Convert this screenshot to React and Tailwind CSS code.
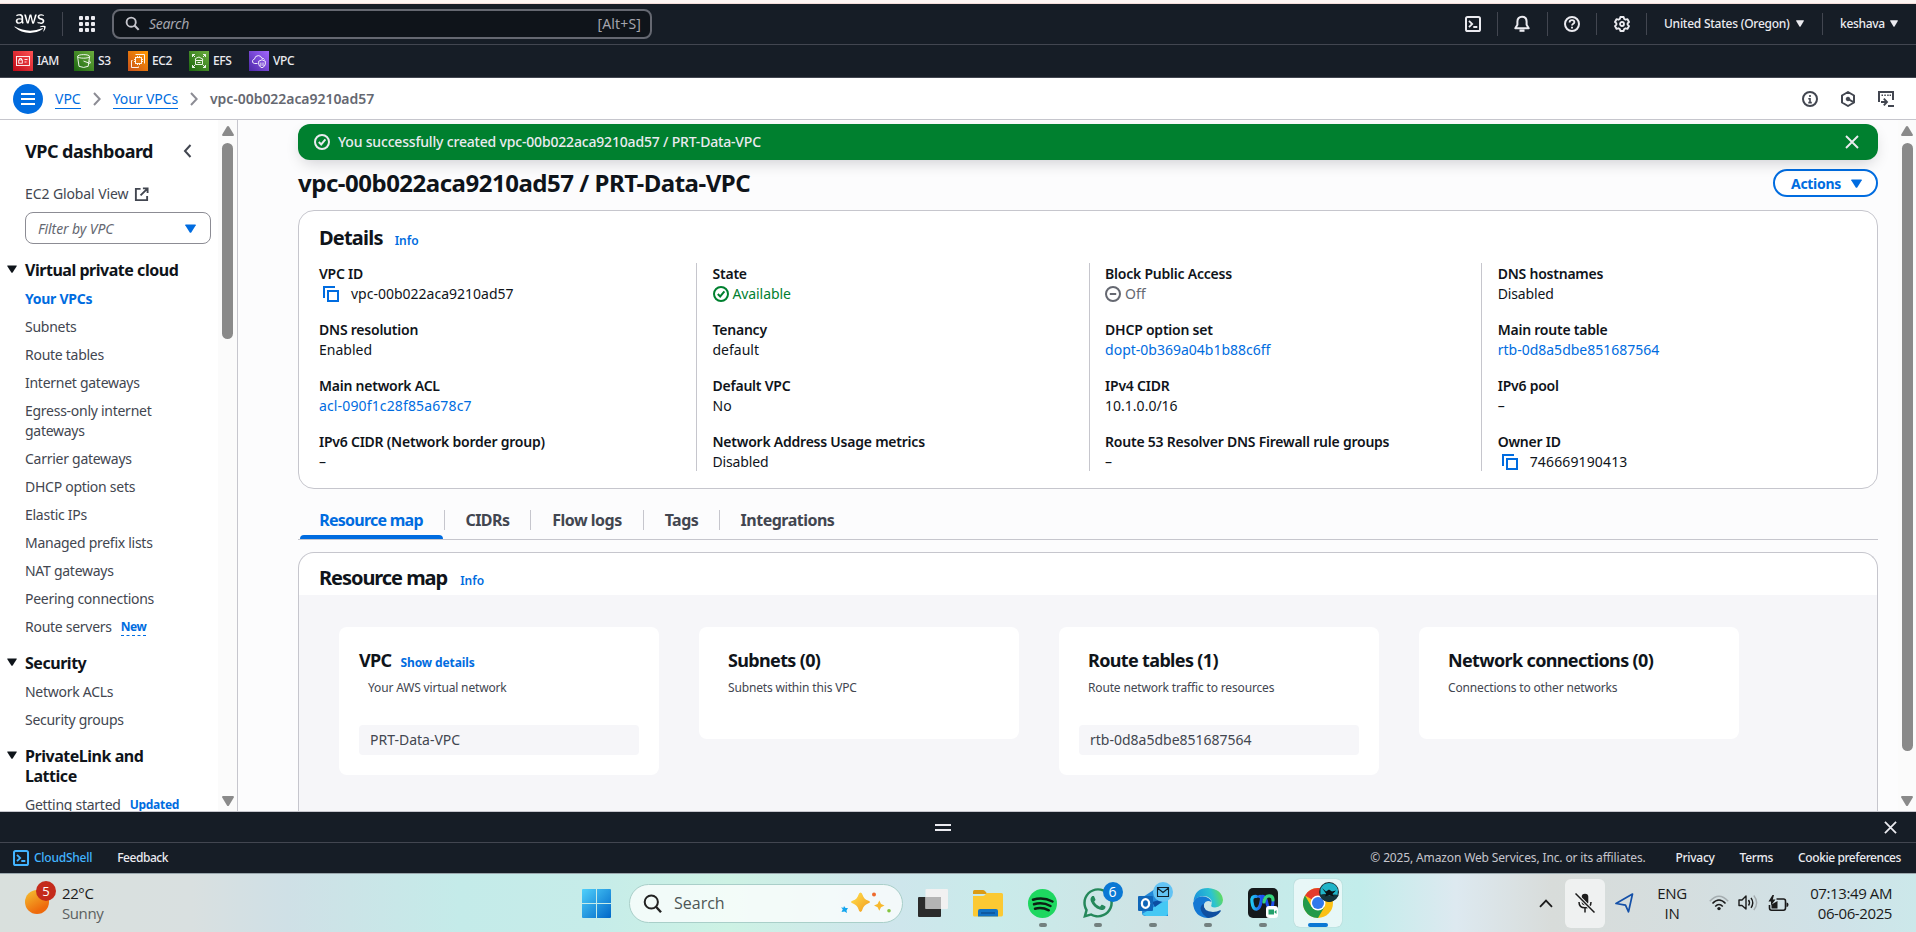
import React from "react";
import { FaAws, FaSpotify, FaWhatsapp } from "react-icons/fa";

const EMBER = "font-['Noto_Sans','Open_Sans',sans-serif]";

function Caret({ w = 10, h = 8, className = "" }) {
  return (
    <svg width={w} height={h} viewBox="0 0 10 8" preserveAspectRatio="none" className={`shrink-0 ${className}`}>
      <path d="M0.6 0.4H9.4Q10 0.4 9.8 1L5.7 7.5Q5 8 4.3 7.5L0.2 1Q0 0.4 0.6 0.4Z" fill="currentColor" />
    </svg>
  );
}

function Ico({ size = 16, children, sw = 2, className = "", vb = "0 0 16 16" }) {
  return (
    <svg width={size} height={size} viewBox={vb} fill="none" stroke="currentColor" strokeWidth={sw} className={`shrink-0 ${className}`}>
      {children}
    </svg>
  );
}

const ShellIcon = ({ className }) => (
  <Ico className={className}>
    <rect x="1" y="1" width="14" height="14" rx="1.6" />
    <path d="M4 4.8L7.2 8L4 11.2M8.3 11H12.3" strokeWidth="1.8" />
  </Ico>
);
const SearchIcon = ({ className, size = 16 }) => (
  <Ico className={className} size={size}>
    <circle cx="6.6" cy="6.6" r="4.9" />
    <path d="M10.2 10.2L14.6 14.8" strokeWidth="2.3" />
  </Ico>
);
const CheckCircle = ({ className }) => (
  <Ico className={className}>
    <circle cx="8" cy="8" r="7" />
    <path d="M4.8 8L7.2 10.4L11.4 5.4" />
  </Ico>
);
const CopyIcon = ({ className }) => (
  <Ico className={className}>
    <path d="M1 12V1H12" />
    <rect x="5" y="5" width="10" height="10" />
  </Ico>
);
const Close = ({ size = 14 }) => (
  <Ico size={size} vb="0 0 14 14">
    <path d="M1 1L13 13M13 1L1 13" strokeWidth="1.9" />
  </Ico>
);
const Crumb = ({ className }) => (
  <svg width="8" height="14" viewBox="0 0 8 14" fill="none" stroke="#8c8c94" strokeWidth="2" className={`shrink-0 ${className}`}>
    <path d="M1 1L6.7 7L1 13" />
  </svg>
);

function Favorite({ label, from, to, width, children }) {
  return (
    <div className={`flex items-center gap-1 ${width}`}>
      <svg width="20" height="20" viewBox="0 0 20 20" className="shrink-0" fill="none" stroke="#fff" strokeWidth="0.9">
        <defs>
          <linearGradient id={`fav-${label}`} x1="0" y1="1" x2="1" y2="0">
            <stop offset="0" stopColor={from} />
            <stop offset="1" stopColor={to} />
          </linearGradient>
        </defs>
        <rect width="20" height="20" fill={`url(#fav-${label})`} stroke="none" />
        {children}
      </svg>
      <span className="text-[12px] font-medium tracking-[-0.4px] text-[#ebebf0]">{label}</span>
    </div>
  );
}

function TopNav() {
  return (
    <header className="flex h-[41px] shrink-0 items-center border-b border-[#424650] bg-[#161d26] pb-[1px] text-[#ebebf0]">
      <FaAws className="ml-[14px] h-[25px] w-[32px] shrink-0 text-white" />
      <div className="ml-[16px] h-6 w-px bg-[#424650]" />
      <svg width="16" height="16" viewBox="0 0 16 16" className="ml-[16px] shrink-0" fill="#ebebf0">
        {[0, 6, 12].map((y) => [0, 6, 12].map((x) => <rect key={`${x}${y}`} x={x} y={y} width="4" height="4" rx="1" />))}
      </svg>
      <div className="ml-[17px] flex h-[30px] w-[540px] shrink-0 items-center rounded-lg border-2 border-[#656871] bg-[#0f141a] pl-[11px] pr-[9px]">
        <SearchIcon size={15} className="text-[#c6c6cd]" />
        <span className="ml-[9px] text-[14px] italic tracking-[-0.3px] text-[#a4a4ad]">Search</span>
        <span className="ml-auto text-[14px] tracking-[0.15px] text-[#a4a4ad]">[Alt+S]</span>
      </div>
      <div className="ml-auto flex items-center">
        <ShellIcon />
        <div className="ml-4 h-6 w-px bg-[#424650]" />
        <Ico className="ml-[15px]" size={18} vb="0 0 18 18" sw={2}>
          <path d="M2.3 13.2L4.4 9.8V6.6C4.4 3.6 6.3 1.8 9 1.8S13.6 3.6 13.6 6.6V9.8L15.7 13.2Z" strokeLinejoin="round" />
          <path d="M6.5 15.6H11.5" strokeWidth="2.4" />
        </Ico>
        <div className="ml-[16px] h-6 w-px bg-[#424650]" />
        <Ico className="ml-4">
          <circle cx="8" cy="8" r="7" />
          <path d="M5.6 6.4C5.6 4.9 6.6 4.1 8 4.1S10.4 5 10.4 6.2C10.4 7.8 8 7.8 8 9.6" strokeWidth="1.8" />
          <path d="M8 10.8V12.5" strokeWidth="1.9" />
        </Ico>
        <div className="ml-4 h-[22px] w-px bg-[#424650]" />
        <Ico className="ml-[17px]">
          <path d="M6.4 1H9.6L10.2 3L11.5 3.7L13.5 3.2L15 6L13.6 7.4V8.7L15 10.1L13.5 12.8L11.5 12.3L10.2 13L9.6 15H6.4L5.8 13L4.5 12.3L2.5 12.8L1 10.1L2.4 8.7V7.4L1 6L2.5 3.2L4.5 3.7L5.8 3Z" strokeWidth="1.9" strokeLinejoin="round" />
          <circle cx="8" cy="8" r="2" strokeWidth="1.8" />
        </Ico>
        <div className="ml-4 h-[22px] w-px bg-[#424650]" />
        <span className="ml-[17px] w-[132px] whitespace-nowrap text-[12px] font-medium tracking-[-0.25px]">United States (Oregon)</span>
        <Caret w={8} h={7} />
        <div className="ml-[18px] h-[22px] w-px bg-[#424650]" />
        <span className="ml-[17px] w-[50px] text-[12px] font-medium tracking-[-0.3px]">keshava</span>
        <Caret w={8} h={7} className="mr-[18px]" />
      </div>
    </header>
  );
}

function Favorites() {
  return (
    <div className="flex h-[33px] shrink-0 items-center border-b border-[#424650] bg-[#161d26] pl-[13px]">
      <Favorite label="IAM" from="#bd0816" to="#ff5252" width="w-[61px]">
        <rect x="3.5" y="5.5" width="13" height="9" />
        <rect x="5.7" y="9" width="3.6" height="3.2" />
        <path d="M6.5 9V7.5H8.5V9M11.5 8.5H14.5M11.5 11H13.5" />
      </Favorite>
      <Favorite label="S3" from="#1b660f" to="#6cae3e" width="w-[54px]">
        <ellipse cx="9.6" cy="5.4" rx="6" ry="1.8" />
        <path d="M3.6 5.5L5 15.3Q9.6 17.6 14.2 15.3L15.6 5.5M9.5 10L15.5 12.3Q17.5 12.4 15.2 9.7" />
      </Favorite>
      <Favorite label="EC2" from="#c8511b" to="#ff9900" width="w-[61px]">
        <rect x="7.5" y="6.5" width="6" height="6" />
        <path d="M9.5 5V6.500M11.5 5V6.500M9.5 12.500V14M11.5 12.500V14M6 8.500H7.500M6 10.500H7.500M13.500 8.500H15M13.500 10.500H15" />
        <path d="M7.500 3.500H16.500V12.500M4.500 9.500H3.500V16.500H10.500V15.500" />
      </Favorite>
      <Favorite label="EFS" from="#1b660f" to="#6cae3e" width="w-[60px]">
        <path d="M3.5 6V3.5H6M3.5 3.5L6 6M14 3.5H16.5V6M16.5 3.5L14 6M3.5 14V16.5H6M3.5 16.5L6 14M14 16.5H16.5V14M16.5 16.5L14 14" />
        <path d="M6.5 9.5Q5.6 7.2 8 6.8Q10 5 12 7.2Q14.3 7.3 13.7 9.5M6.5 9.5H13.5V13.5H6.5ZM8.5 11.5H11.5" />
      </Favorite>
      <Favorite label="VPC" from="#4d27a8" to="#a166ff" width="w-[60px]">
        <path d="M8.5 12.5H5.5Q3 12 3.5 9.8Q4 8.3 5.4 8.2Q6 4.6 9.3 4.6Q12 4.6 12.8 7.2Q15 7.2 15.5 8.5" />
        <path d="M13 8.8L16.3 10.2V13Q16.2 15.5 13 16.8Q9.8 15.5 9.7 13V10.2ZM11.9 11.5V15M14 11.5V15" />
      </Favorite>
    </div>
  );
}

function Breadcrumbs() {
  return (
    <div className="flex h-[42px] shrink-0 items-center border-b border-[#c6c6cd] bg-white text-[14px]">
      <div className="ml-[13px] flex h-[30px] w-[30px] shrink-0 items-center justify-center rounded-full bg-[#006ce0]">
        <svg width="14" height="12" viewBox="0 0 14 12" fill="#fff">
          <path d="M0 0H14V2H0ZM0 5H14V7H0ZM0 10H14V12H0Z" />
        </svg>
      </div>
      <span className="ml-[12px] border-b border-[#006ce0] leading-[19px] text-[#006ce0]">VPC</span>
      <Crumb className="ml-[12px]" />
      <span className="ml-[12px] border-b border-[#006ce0] leading-[19px] tracking-[-0.1px] text-[#006ce0]">Your VPCs</span>
      <Crumb className="ml-[12px]" />
      <span className="ml-[12px] font-semibold tracking-[-0.05px] text-[#656871]">vpc-00b022aca9210ad57</span>
      <div className="ml-auto mr-[22px] flex items-center text-[#424650]">
        <Ico>
          <circle cx="8" cy="8" r="7" />
          <path d="M8 4V6M6.3 7.8H8V12M6.3 11.6H9.8" strokeWidth="1.6" />
        </Ico>
        <Ico className="ml-[22px]">
          <path d="M8 1L14 4.5V11.5L8 15L2 11.5V4.5Z" strokeLinejoin="round" />
          <circle cx="8" cy="8" r="1.8" fill="currentColor" strokeWidth="1" />
          <path d="M8 8L13.5 11.2" />
        </Ico>
        <Ico className="ml-[22px]">
          <path d="M1 11V1H15V9" />
          <path d="M3.5 4.2H5M6.3 4.2H7.8M9.2 4.2H10.7M11.6 4.2H13" strokeWidth="1.6" />
          <path d="M3 11H8.5M5.8 7.6L9 11L5.8 14.4M10 15H16" strokeWidth="1.9" />
        </Ico>
      </div>
    </div>
  );
}

function NavHeading({ children, className = "" }) {
  return (
    <div className={`flex text-[16px] font-bold leading-5 text-[#0f141a] ${className}`}>
      <Caret w={10} h={8} className="ml-[7px] mr-[8px] mt-[5px]" />
      <span className="w-[160px] tracking-[-0.47px]">{children}</span>
    </div>
  );
}

function NavItem({ children, className = "mt-2" }) {
  return <div className={`w-[195px] pl-[25px] text-[14px] leading-5 tracking-[-0.27px] text-[#424650] ${className}`}>{children}</div>;
}

function Scrollbar({ thumb, className = "" }) {
  return (
    <div className={`flex shrink-0 flex-col items-center bg-[#fbfbfb] ${className}`}>
      <svg width="12" height="10" viewBox="0 0 12 10" className="mt-[6px] shrink-0" fill="#8a8a8a">
        <path d="M6 0Q6.6 0 7 .6L11.8 8.4Q12.2 10 11 10H1Q-.2 10 .2 8.4L5 .6Q5.4 0 6 0Z" />
      </svg>
      <div className={`mt-[7px] w-[11px] shrink-0 rounded-full bg-[#8a8a8a] ${thumb}`} />
      <svg width="12" height="10" viewBox="0 0 12 10" className="mb-[5px] mt-auto shrink-0 rotate-180" fill="#8a8a8a">
        <path d="M6 0Q6.6 0 7 .6L11.8 8.4Q12.2 10 11 10H1Q-.2 10 .2 8.4L5 .6Q5.4 0 6 0Z" />
      </svg>
    </div>
  );
}

function Sidebar() {
  return (
    <aside className="flex w-[238px] shrink-0 overflow-hidden border-r border-[#c6c6cd] bg-white">
      <nav className="w-[218px] shrink-0">
        <div className="flex items-center pl-[25px] pt-5">
          <span className="w-[158px] text-[18px] font-bold leading-[22px] tracking-[-0.5px] text-[#0f141a]">VPC dashboard</span>
          <Ico size={14} vb="0 0 14 14" className="text-[#424650]">
            <path d="M7.5 1L2 7L7.5 13" />
          </Ico>
        </div>
        <div className="mt-[22px] flex items-center pl-[25px] text-[14px] leading-5 text-[#424650]">
          <span className="w-[109px] tracking-[-0.1px]">EC2 Global View</span>
          <Ico size={15} className="text-[#424650]">
            <path d="M7 2H2V14H14V9.5M9.5 1.5H14.5V6.5M14 2L7 9" />
          </Ico>
        </div>
        <div className="ml-[25px] mt-[8px] flex h-8 w-[186px] items-center rounded-lg border border-[#8c8c94] pl-3 pr-[14px]">
          <span className="text-[14px] italic tracking-[-0.1px] text-[#656871]">Filter by VPC</span>
          <Caret w={11} h={9} className="ml-auto text-[#006ce0]" />
        </div>
        <NavHeading className="mt-[16px]">Virtual private cloud</NavHeading>
        <NavItem className="mt-[9px]">
          <span className="font-bold text-[#006ce0]">Your VPCs</span>
        </NavItem>
        <NavItem>Subnets</NavItem>
        <NavItem>Route tables</NavItem>
        <NavItem>Internet gateways</NavItem>
        <NavItem>Egress-only internet gateways</NavItem>
        <NavItem>Carrier gateways</NavItem>
        <NavItem>DHCP option sets</NavItem>
        <NavItem>Elastic IPs</NavItem>
        <NavItem>Managed prefix lists</NavItem>
        <NavItem>NAT gateways</NavItem>
        <NavItem>Peering connections</NavItem>
        <NavItem className="mt-2 flex">
          Route servers
          <span className="ml-[9px] h-[19px] border-b border-dashed border-[#006ce0] text-[12px] font-bold tracking-[-0.5px] text-[#006ce0]">New</span>
        </NavItem>
        <NavHeading className="mt-[16px]">Security</NavHeading>
        <NavItem className="mt-[9px]">Network ACLs</NavItem>
        <NavItem>Security groups</NavItem>
        <NavHeading className="mt-[16px]">PrivateLink and Lattice</NavHeading>
        <NavItem className="mt-[9px] flex">
          Getting started <span className="ml-[9px] border-b border-dashed border-[#006ce0] text-[12px] font-bold text-[#006ce0]">Updated</span>
        </NavItem>
      </nav>
      <Scrollbar className="w-[19px]" thumb="h-[196px]" />
    </aside>
  );
}

function Field({ label, children }) {
  return (
    <div className="text-[14px] leading-5">
      <div className="font-semibold tracking-[-0.23px] text-[#0f141a]">{label}</div>
      <div className="flex h-5 items-center text-[#0f141a]">{children}</div>
    </div>
  );
}

const Blue = ({ children, className = "" }) => <span className={`text-[#006ce0] ${className}`}>{children}</span>;

const columns = [
  [
    ["VPC ID", <><CopyIcon className="ml-1 mr-[12px] text-[#006ce0]" />vpc-00b022aca9210ad57</>],
    ["DNS resolution", "Enabled"],
    ["Main network ACL", <Blue className="tracking-[0.14px]">acl-090f1c28f85a678c7</Blue>],
    ["IPv6 CIDR (Network border group)", "–"],
  ],
  [
    ["State", <span className="flex items-center gap-[4px] tracking-[-0.1px] text-[#00802f]"><CheckCircle />Available</span>],
    ["Tenancy", "default"],
    ["Default VPC", "No"],
    ["Network Address Usage metrics", <span className="tracking-[-0.15px]">Disabled</span>],
  ],
  [
    ["Block Public Access", <span className="flex items-center gap-[4px] text-[#656871]"><Ico><circle cx="8" cy="8" r="7" /><path d="M4.8 8H11.2" /></Ico>Off</span>],
    ["DHCP option set", <Blue>dopt-0b369a04b1b88c6ff</Blue>],
    ["IPv4 CIDR", "10.1.0.0/16"],
    ["Route 53 Resolver DNS Firewall rule groups", "–"],
  ],
  [
    ["DNS hostnames", <span className="tracking-[-0.15px]">Disabled</span>],
    ["Main route table", <Blue>rtb-0d8a5dbe851687564</Blue>],
    ["IPv6 pool", "–"],
    ["Owner ID", <><CopyIcon className="ml-1 mr-[12px] text-[#006ce0]" /><span className="tracking-[0.14px]">746669190413</span></>],
  ],
];

function Details() {
  return (
    <section className="mt-[13px] h-[279px] rounded-2xl border border-[#c6c6cd] bg-white pt-[15px]">
      <div className="flex items-baseline pl-5">
        <h2 className="text-[20px] font-bold leading-6 tracking-[-0.8px] text-[#0f141a]">Details</h2>
        <span className="ml-3 text-[12px] font-semibold text-[#006ce0]">Info</span>
      </div>
      <div className="mt-[13px] flex">
        {columns.map((col, i) => (
          <div key={i} className={`flex h-[208px] shrink-0 flex-col gap-4 pt-px ${i ? "w-[392.6px] border-l border-[#c6c6cd] pl-[15.5px]" : "w-[397px] pl-5"}`}>
            {col.map(([label, value]) => (
              <Field key={label} label={label}>{value}</Field>
            ))}
          </div>
        ))}
      </div>
    </section>
  );
}

function Tab({ children, width }) {
  return (
    <div className={`flex h-[20px] items-center justify-center border-l border-[#c6c6cd] ${width}`}>
      <span className="leading-5">{children}</span>
    </div>
  );
}

function Tabs() {
  return (
    <div className="mt-[10px] flex h-[41px] shrink-0 border-b border-[#c6c6cd] text-[16px] font-bold tracking-[-0.5px] text-[#424650]">
      <div className="flex w-[146px] flex-col items-center text-[#006ce0]">
        <div className="mt-[11px] h-5 leading-5 tracking-[-0.75px]">Resource map</div>
        <div className="mt-auto h-1 w-[143px] rounded-t-sm bg-[#006ce0]" />
      </div>
      <div className="mt-[11px] flex">
        <Tab width="w-[86px]">CIDRs</Tab>
        <Tab width="w-[113px]">Flow logs</Tab>
        <Tab width="w-[76px]">Tags</Tab>
        <Tab width="w-[136px]">Integrations</Tab>
      </div>
    </div>
  );
}

function ResourceCard({ title, link, desc, item, descPad = "" }) {
  return (
    <div className={`w-[320px] shrink-0 rounded-lg bg-white pt-[21px] ${item ? "h-[148px] px-5" : "h-[112px] px-[29px]"}`}>
      <div className={`flex items-baseline ${descPad && !link ? descPad : ""}`}>
        <h3 className="text-[18px] font-bold leading-6 tracking-[-0.65px] text-[#0f141a]">{title}</h3>
        {link && <span className="ml-[9px] text-[12px] font-bold tracking-[-0.1px] text-[#006ce0]">{link}</span>}
      </div>
      <div className={`mt-[8px] text-[12px] leading-4 tracking-[-0.16px] text-[#424650] ${descPad}`}>{desc}</div>
      {item && (
        <div className="mt-[29px] flex h-[30px] items-center rounded-sm bg-[#f6f6f9] pb-px pl-[11px] text-[14px] text-[#424650]">{item}</div>
      )}
    </div>
  );
}

function Main() {
  return (
    <main className="flex w-[1580px] shrink-0 flex-col overflow-visible">
      <div className="z-10 mt-[4px] flex h-9 shrink-0 items-center rounded-xl bg-[#00802f] pl-4 pr-[19px] text-[14px] text-[#ebebf0] shadow-[0_6px_16px_-4px_rgba(0,7,22,0.2)]">
        <CheckCircle />
        <span className="ml-2 pb-px font-medium tracking-[-0.18px]">You successfully created vpc-00b022aca9210ad57 / PRT-Data-VPC</span>
        <span className="ml-auto"><Close /></span>
      </div>
      <div className="mt-[9px] flex h-7 shrink-0 items-center justify-between">
        <h1 className="text-[24px] font-bold leading-7 tracking-[-0.49px] text-[#0f141a]">vpc-00b022aca9210ad57 / PRT-Data-VPC</h1>
        <button className="flex h-7 w-[105px] items-center rounded-full border-2 border-[#006ce0] bg-white pl-4 text-[14px] font-bold tracking-[-0.3px] text-[#006ce0]">
          Actions
          <Caret w={11} h={9} className="ml-[10px]" />
        </button>
      </div>
      <Details />
      <Tabs />
      <section className="mt-3 h-[259px] shrink-0 overflow-hidden rounded-t-2xl border border-b-0 border-[#c6c6cd] bg-white">
        <div className="flex h-[42px] items-baseline pl-5 pt-[13px]">
          <h2 className="text-[20px] font-bold leading-6 tracking-[-1.05px] text-[#0f141a]">Resource map</h2>
          <span className="ml-[13px] text-[12px] font-semibold text-[#006ce0]">Info</span>
        </div>
        <div className="flex h-[220px] gap-10 bg-[#f6f6f9] pl-10 pt-8">
          <ResourceCard title="VPC" link="Show details" desc="Your AWS virtual network" item="PRT-Data-VPC" descPad="pl-[9px]" />
          <ResourceCard title="Subnets (0)" desc="Subnets within this VPC" />
          <ResourceCard title="Route tables (1)" desc="Route network traffic to resources" item="rtb-0d8a5dbe851687564" descPad="pl-[9px]" />
          <ResourceCard title="Network connections (0)" desc="Connections to other networks" />
        </div>
      </section>
    </main>
  );
}

function Footer() {
  return (
    <footer className="shrink-0 bg-[#161d26] text-[12px] font-medium text-[#ebebf0]">
      <div className="flex h-[32px] items-center border-b border-t border-[#424650] border-t-[#c6c6cd]">
        <svg width="16" height="7" viewBox="0 0 16 7" className="ml-[935px]" fill="#ebebf0">
          <path d="M0 0H16V2H0ZM0 5H16V7H0Z" />
        </svg>
        <span className="ml-auto mr-[19px]"><Close size={13} /></span>
      </div>
      <div className="flex h-[30px] items-center">
        <ShellIcon className="ml-[13px] text-[#42b4ff]" />
        <span className="ml-[5px] tracking-[-0.25px] text-[#42b4ff]">CloudShell</span>
        <span className="ml-[25px] tracking-[-0.45px]">Feedback</span>
        <span className="ml-auto font-normal tracking-[-0.14px] text-[#c6c6cd]">© 2025, Amazon Web Services, Inc. or its affiliates.</span>
        <span className="ml-[30px] tracking-[-0.3px]">Privacy</span>
        <span className="ml-[25px] tracking-[-0.3px]">Terms</span>
        <span className="ml-[25px] mr-[15px] tracking-[-0.42px]">Cookie preferences</span>
      </div>
    </footer>
  );
}

function TaskApp({ children, dot = true, active = false }) {
  return (
    <div className="flex w-[55px] shrink-0 justify-center">
      <div className={`relative flex h-[48px] w-[48px] items-center justify-center rounded-md ${active ? "bg-white/60 shadow-[0_0_1px_rgba(0,0,0,0.3)]" : ""}`}>
        {children}
        {dot && <div className={`absolute bottom-0 h-1 rounded-full ${active ? "w-5 bg-[#0a78d4]" : "w-2 bg-[#73807f]"}`} />}
      </div>
    </div>
  );
}

function Taskbar() {
  return (
    <div className="flex h-[59px] shrink-0 items-center border-t border-[#9aa7ad] bg-[linear-gradient(90deg,#d9e0dd_0%,#d9e0e0_10%,#cfe0e6_15%,#c4ebe9_24%,#c6ece9_31%,#cdf2e4_38%,#cfe5ec_46%,#c9ebea_52%,#cfe2e4_61%,#c6ebea_67%,#c2edeb_71%,#dde9f0_76%,#d8dcda_81%,#d5dedf_88%,#cfe2e8_96%,#cce8ea_100%)] font-['Open_Sans','Noto_Sans',sans-serif] text-[15px] leading-5 text-[#1b1b1b]">
      <div className="relative ml-[25px] h-[36px] w-[37px] shrink-0">
        <div className="absolute left-0 top-[5px] h-6 w-6 rounded-full bg-[linear-gradient(150deg,#f5c332,#ee6a0c_75%)]" />
        <div className="absolute left-[11px] top-[-4px] flex h-5 w-5 items-center justify-center rounded-full bg-[#c42b1c] text-[13px] text-white">5</div>
      </div>
      <div className="w-[520px] shrink-0 tracking-[-0.4px]">
        <div>22°C</div>
        <div className="text-[#5b5f60]">Sunny</div>
      </div>
      <svg width="29" height="29" viewBox="0 0 29 29" className="shrink-0">
        <defs>
          <linearGradient id="win" x1="0" y1="0" x2="1" y2="1">
            <stop offset="0" stopColor="#4fd0fb" />
            <stop offset="1" stopColor="#0067c8" />
          </linearGradient>
        </defs>
        <path d="M1 0H14V14H0V1Q0 0 1 0ZM15 0H28Q29 0 29 1V14H15ZM0 15H14V29H1Q0 29 0 28ZM15 15H29V28Q29 29 28 29H15Z" fill="url(#win)" />
      </svg>
      <div className="ml-[18px] flex h-[39px] w-[274px] shrink-0 items-center rounded-full border border-[#a9cfc9] bg-white/75 pl-[13px] pr-[11px]">
        <Ico size={19} vb="0 0 19 19" className="text-[#222]">
          <circle cx="8.3" cy="8" r="6.6" strokeWidth="2" />
          <path d="M13 12.8L18 18.2" strokeWidth="2.4" />
        </Ico>
        <span className="ml-[12px] text-[16px] text-[#4d5655]">Search</span>
        <svg width="50" height="22" viewBox="0 0 50 22" className="ml-auto">
          <defs>
            <linearGradient id="spark" x1="0" y1="0" x2="1" y2="1">
              <stop offset="0" stopColor="#ffe14d" />
              <stop offset="1" stopColor="#f29a1f" />
            </linearGradient>
          </defs>
          <path d="M19.500 0.500Q21 0.500 21.600 3Q22.800 7 27 8.600Q31 10.200 27 11.600Q22.800 13.200 21.600 17Q21 20 19.500 20T17.400 17Q16.200 13.200 12 11.600Q8 10.200 12 8.600Q16.200 7 17.400 3Q18 .5 19.500 .5Z" fill="url(#spark)" />
          <path d="M38.300 8.500L40 12L43.500 13.500L40 15.200L38.300 18.700L36.600 15.200L33 13.500L36.600 12Z" fill="#f7b92e" />
          <path d="M3 14L4.500 16L7 16L5.500 18.500L6 21L3.500 19.500L0.500 20L1.800 17.300L0 15.500L2.500 15.800Z" fill="#12a5ee" />
          <circle cx="33" cy="2.500" r="2" fill="#ee6a2d" />
          <circle cx="48" cy="18.700" r="1.800" fill="#84c440" />
        </svg>
      </div>
      <div className="ml-[2px] flex">
        <TaskApp dot={false}>
          <svg width="30" height="28" viewBox="0 0 30 28">
            <rect y="8" width="23" height="20" rx="1" fill="#2b2b2b" />
            <rect x="7.500" y="0" width="22.500" height="20" rx="1" fill="#f1f1f1" />
            <path d="M7.500 8H23V20H7.500Z" fill="#b4b4b4" />
          </svg>
        </TaskApp>
        <TaskApp dot={false}>
          <svg width="30" height="28" viewBox="0 0 30 28">
            <path d="M0 2.500Q0 1 1.500 1H10Q11 1 12 2L14.500 5H0Z" fill="#dc9b14" />
            <path d="M0 7H10Q11 7 12 6L13.500 4H28.500Q30 4 30 5.500V25.500Q30 27.500 28.500 27.500H1.500Q0 27.500 0 26Z" fill="#fbc933" />
            <path d="M5 27.500V22Q5 20 7 20H23Q25 20 25 22V27.500Z" fill="#1272c4" />
            <path d="M8 24H22" stroke="#0c4d8f" strokeWidth="1.300" />
          </svg>
        </TaskApp>
        <TaskApp>
          <svg width="29" height="29" viewBox="0 0 29 29">
            <circle cx="14.500" cy="14.500" r="14.500" fill="#1ed760" />
            <path d="M5 10.700Q15 7.500 24.500 12.500M6 15.300Q14.500 12.800 22.500 17M7 19.700Q14 17.800 20.800 21.300" fill="none" stroke="#0c1f14" strokeWidth="2.500" strokeLinecap="round" />
          </svg>
        </TaskApp>
        <TaskApp>
          <FaWhatsapp className="h-[34px] w-[34px] text-[#25885b]" />
          <div className="absolute right-[-1px] top-[3px] flex h-5 w-5 items-center justify-center rounded-full bg-[#0a78d4] text-[14px] text-white">6</div>
        </TaskApp>
        <TaskApp>
          <svg width="36" height="36" viewBox="0 0 36 36" className="absolute left-[8px] top-[3px]">
            <path d="M6 15L18 7L31 15V34H9Q5 34 5 31Z" fill="#2288d8" />
            <path d="M5 32L31 17V31Q31 34 28 34H9Z" fill="#45c8f4" />
            <path d="M15 20L30 16L18 25Z" fill="#0b4ea2" />
            <rect x="1" y="14" width="15" height="15" rx="1" fill="#1066b8" />
            <ellipse cx="8.500" cy="21.500" rx="3.600" ry="4.300" fill="none" stroke="#fff" strokeWidth="2.300" />
            <circle cx="26" cy="10" r="10" fill="#63c3f4" />
            <path d="M20.500 5.500H31.500V14.500H20.500ZM20.500 6L26 10.500L31.500 6" fill="none" stroke="#10202b" strokeWidth="1.100" />
          </svg>
        </TaskApp>
        <TaskApp>
          <svg width="30" height="30" viewBox="0 0 30 30">
            <defs>
              <linearGradient id="edgeA" x1="0" y1="0.400" x2="1" y2="0.200">
                <stop offset="0" stopColor="#1a93dc" />
                <stop offset="0.600" stopColor="#2cc3d0" />
                <stop offset="1" stopColor="#6ae04a" />
              </linearGradient>
            </defs>
            <path d="M0.500 13Q2 0 15 0Q29 1 30 12Q29.500 19 22 19.500Q17 19.500 18.500 16.500Q20 11 14 8.500Q5 7 0.500 13Z" fill="url(#edgeA)" />
            <path d="M0 15Q2 8 10 8.500Q17 9 18.500 14Q13 11.500 11 16Q10 24 18 28.500Q17 30 14 30Q1 28.500 0 15Z" fill="#1478d4" />
            <path d="M10.500 15.500Q10 23.500 20 24Q24 24 27 22.300Q28.300 22 27.600 23.500Q23 30 15 30Q8 26 7.500 20Q8 17 10.500 15.500Z" fill="#0f4fa0" />
          </svg>
        </TaskApp>
        <TaskApp>
          <svg width="30" height="30" viewBox="0 0 30 30">
            <defs>
              <linearGradient id="wbx" x1="0" y1="0" x2="1" y2="0">
                <stop offset="0" stopColor="#20c6f2" />
                <stop offset="1" stopColor="#1e50ee" />
              </linearGradient>
            </defs>
            <rect width="30" height="30" rx="5" fill="#15191b" />
            <path d="M13 8.500Q17 7 18.500 13Q19.500 19 21.500 20Q25 20 25 13" fill="none" stroke="#1e50ee" strokeWidth="3" strokeLinecap="round" />
            <path d="M8.500 8.500Q3 7.500 4 14Q5 22 9 21Q12 20 13 14Q14.500 8 11.500 8.500" fill="none" stroke="url(#wbx)" strokeWidth="3.200" strokeLinecap="round" />
            <path d="M16 14Q17 7.500 21.500 7.800Q25 8 25 12" fill="none" stroke="#35d27c" strokeWidth="3.200" strokeLinecap="round" />
            <rect x="18" y="18" width="12" height="12" rx="3" fill="#fff" />
            <path d="M20.500 21.500H26V26.500H20.500ZM26.500 23.500L28.500 22V26L26.500 24.500Z" fill="#22a06b" />
          </svg>
        </TaskApp>
        <TaskApp active>
          <svg width="36" height="38" viewBox="0 0 36 38" className="absolute left-[9px] top-[2px]">
            <circle cx="15" cy="22" r="15" fill="#fbc116" />
            <path d="M15 22L2 14.500A15 15 0 0 1 28 14.500Z" fill="#e33b2e" />
            <path d="M2 14.500A15 15 0 0 0 15 37L21.500 25.700L8.500 25.700Z" fill="#229a4a" />
            <circle cx="15" cy="22" r="7.500" fill="#fff" />
            <circle cx="15" cy="22" r="6" fill="#3179ec" />
            <circle cx="26" cy="11" r="10" fill="#1d2a30" />
            <path d="M17.500 8Q20 2 26 2Q33 2 35 9L34.500 14Q31 19 26 19Q20 19 17.500 13Z" fill="#1fb4c8" />
            <path d="M17 14Q22 12 26 14.500Q31 13 35.500 14Q32 21 26 21Q19 20 17 14Z" fill="#15353c" />
            <path d="M19 7L23 10.500L26 8.500L29 10.500L33 9.500L29.500 13L31 15.500L26.500 14L22 15.500L23 12.500Z" fill="#0a1114" />
          </svg>
        </TaskApp>
      </div>
      <div className="ml-auto flex shrink-0 items-center">
        <svg width="14" height="9" viewBox="0 0 14 9" fill="none" stroke="#1b1b1b" strokeWidth="1.800">
          <path d="M1 7.800L7 1.600L13 7.800" />
        </svg>
        <div className="ml-[12px] flex h-[49px] w-[40px] items-center justify-center rounded-md bg-white/60">
          <svg width="20" height="20" viewBox="0 0 20 20" fill="none" stroke="#1b1b1b" strokeWidth="1.500">
            <rect x="6.700" y="0.700" width="6.600" height="11.600" rx="3.300" fill="#1b1b1b" stroke="none" />
            <path d="M4 9Q4 14.800 10 14.800T16 9M10 15V19.500" />
            <path d="M0.800 0.800L19.200 19.200" stroke="#f0f2f2" strokeWidth="3.400" />
            <path d="M0.500 0.500L19.500 19.500" />
          </svg>
        </div>
        <svg width="19" height="20" viewBox="0 0 19 20" fill="none" stroke="#1450a8" strokeWidth="1.700" className="ml-[10px]" strokeLinejoin="round">
          <path d="M17.500 1L1 10.500L10.500 12.200L13.500 18.800Z" />
        </svg>
        <div className="ml-[21px] w-[34px] text-center tracking-[-0.300px]">
          <div>ENG</div>
          <div>IN</div>
        </div>
        <svg width="20" height="16" viewBox="0 0 20 16" fill="none" stroke="#1b1b1b" strokeWidth="1.500" className="ml-[20px]">
          <path d="M0.800 6.200Q10 -3.800 19.200 6.200" stroke="#a5adb0" />
          <path d="M3.500 8.600Q10 1.600 16.500 8.600M6.200 11.400Q10 7.400 13.800 11.400" />
          <circle cx="10" cy="13.600" r="1.700" fill="#1b1b1b" stroke="none" />
        </svg>
        <svg width="20" height="18" viewBox="0 0 20 18" fill="none" stroke="#1b1b1b" strokeWidth="1.400" className="ml-[9px]">
          <path d="M1 6H4L8 2V15L4 11.500H1Z" strokeLinejoin="round" />
          <path d="M10.500 6Q12.500 8.700 10.500 11.500M13 3.800Q16.500 8.700 13 13.800" />
          <path d="M15.800 1.500Q21.500 8.700 15.800 16" stroke="#a5adb0" />
        </svg>
        <svg width="21" height="17" viewBox="0 0 21 17" fill="none" stroke="#1b1b1b" strokeWidth="1.600" className="ml-[10px]">
          <path d="M8.500 4H15.500Q17.500 4 17.500 6V13Q17.500 15.200 15.500 15.200H3.500Q1.500 15.200 1.500 13V10" />
          <path d="M18.500 7.500Q20.500 7.500 20.500 9.700T18.500 12Z" fill="#1b1b1b" stroke="none" />
          <path d="M3.500 13.500V9.500L9.500 6V13.500Z" fill="#1b1b1b" stroke="none" />
          <path d="M4.500 0L0.500 6.500H3V10.500L7.500 4.500H4.800L6 0Z" fill="#1b1b1b" stroke="none" />
        </svg>
        <div className="ml-[13px] mr-[24px] w-[90px] whitespace-nowrap text-right tracking-[-0.400px]">
          <div>07:13:49 AM</div>
          <div>06-06-2025</div>
        </div>
      </div>
    </div>
  );
}

export default function App() {
  return (
    <div className={`flex h-[932px] w-[1916px] flex-col overflow-hidden bg-[#fcfcfd] ${EMBER}`}>
      <div className="h-1 shrink-0 border-b border-[#f3dcd8] bg-[#fdf6f3]" />
      <TopNav />
      <Favorites />
      <Breadcrumbs />
      <div className="flex min-h-0 flex-1">
        <Sidebar />
        <div className="flex min-w-0 flex-1 justify-between overflow-hidden pl-[60px]">
          <Main />
          <Scrollbar className="w-[18px]" thumb="h-[608px]" />
        </div>
      </div>
      <Footer />
      <Taskbar />
    </div>
  );
}
